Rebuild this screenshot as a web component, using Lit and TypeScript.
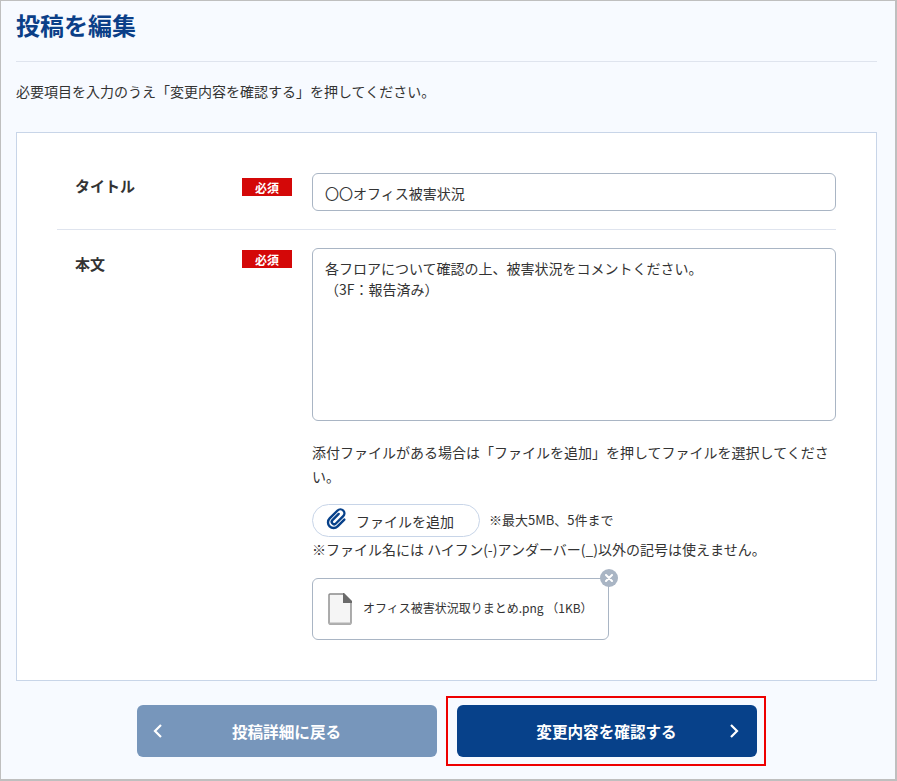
import { LitElement, html, css } from "lit";
import { customElement } from "lit/decorators.js";

@customElement("app-root")
export class AppRoot extends LitElement {
  static styles = css`
    :host { display: block; font-family: "Noto Sans CJK JP", "Noto Sans", sans-serif; color: #333; }
    * { box-sizing: border-box; }
    .page {
      width: 897px; height: 781px; background: #f7faff;
      border-top: 1px solid #bfbfbf; border-left: 1px solid #bfbfbf;
      border-right: 2px solid #bfbfbf; border-bottom: 2px solid #bfbfbf;
      padding: 0 18px 0 15px; overflow: hidden;
    }
    h1 { margin: 0; font-size: 24px; line-height: 24px; padding-top: 12px; font-weight: 700; color: #0b3f88; border-bottom: 1px solid #dfe4ee; height: 61px; }
    .lead { margin: 0; font-size: 14px; line-height: 20px; padding-top: 19px; height: 70px; }
    .card { background: #fff; border: 1px solid #c8d5e8; height: 549px; padding: 40px 40px 0; }
    .row { display: flex; }
    .row.first { height: 57px; border-bottom: 1px solid #dfe4ee; }
    .row.second { padding-top: 18px; }
    .label { width: 185px; padding-left: 18px; font-size: 15px; font-weight: 700; line-height: 26px; }
    .second .label { padding-top: 3px; }
    .badge-col { width: 70px; padding-top: 5px; }
    .second .badge-col { padding-top: 2px; }
    .badge { width: 50px; height: 18px; background: #d40808; color: #fff; font-size: 12px; font-weight: 700; line-height: 19px; text-align: center; }
    .main { width: 524px; }
    .input { height: 38px; border: 1px solid #a9b5c4; border-radius: 6px; padding: 0 12px; font-size: 14px; line-height: 38px; }
    .area { height: 173px; border: 1px solid #a9b5c4; border-radius: 6px; padding: 9px 12px; font-size: 14px; line-height: 21px; white-space: pre-wrap; }
    .note { margin: 0; font-size: 14px; line-height: 24px; padding-top: 19px; }
    .add-row { display: flex; align-items: center; gap: 10px; margin-top: 16px; }
    .add { width: 168px; height: 33px; border: 1px solid #c8d5e8; border-radius: 17px; background: #fff; display: flex; align-items: center; gap: 8px; padding-left: 13px; font-size: 14px; }
    .add svg { margin-bottom: 3px; }
    .small { font-size: 13px; line-height: 20px; margin-left: -1px; margin-bottom: 2px; }
    .rule { margin: 0; font-size: 14px; line-height: 20px; padding-top: 2px; }
    .file { position: relative; width: 297px; height: 62px; margin-top: 19px; border: 1px solid #a9b5c4; border-radius: 6px; display: flex; align-items: center; gap: 11px; padding-left: 15px; font-size: 12px; }
    .file span { margin-bottom: 3px; }
    .close { position: absolute; right: -10px; top: -10px; width: 18px; height: 18px; border-radius: 50%; background: #a9b5c4; display: flex; align-items: center; justify-content: center; }
    .btns { display: flex; justify-content: center; gap: 20px; padding-top: 24px; }
    .btn { position: relative; width: 300px; height: 52px; border-radius: 6px; color: #fff; font-size: 15.6px; font-weight: 700; display: flex; align-items: center; justify-content: center; }
    .back { background: #7796bb; }
    .next { background: #07418a; }
    .next::after { content: ""; position: absolute; left: -11px; right: -9px; top: -9px; bottom: -9px; border: 2px solid #ee0000; }
    .chev { position: absolute; top: 18px; }
    .back .chev { left: 16px; }
    .next .chev { right: 18px; }
  `;

  render() {
    return html`
      <div class="page">
        <h1>投稿を編集</h1>
        <p class="lead">必要項目を入力のうえ「変更内容を確認する」を押してください。</p>
        <div class="card">
          <div class="row first">
            <div class="label">タイトル</div>
            <div class="badge-col"><div class="badge">必須</div></div>
            <div class="main"><div class="input">〇〇オフィス被害状況</div></div>
          </div>
          <div class="row second">
            <div class="label">本文</div>
            <div class="badge-col"><div class="badge">必須</div></div>
            <div class="main">
              <div class="area">各フロアについて確認の上、被害状況をコメントください。
（3F：報告済み）</div>
              <p class="note">添付ファイルがある場合は「ファイルを追加」を押してファイルを選択してください。</p>
              <div class="add-row">
                <div class="add">
                  <svg width="22" height="22" viewBox="0 0 22 22" fill="none" stroke="#07418a" stroke-width="3" stroke-linecap="round">
                    <path transform="translate(11 11) rotate(45) scale(.8) translate(-9 -13)" d="M6 7v11a3 3 0 0 0 6 0V5a5 5 0 0 0-10 0v14a7 7 0 0 0 14 0V7"/>
                  </svg>
                  <span>ファイルを追加</span>
                </div>
                <span class="small">※最大5MB、5件まで</span>
              </div>
              <p class="rule">※ファイル名には ハイフン(-)アンダーバー(_)以外の記号は使えません。</p>
              <div class="file">
                <svg width="24" height="32" viewBox="0 0 24 32">
                  <path d="M1 2a1 1 0 0 1 1-1h13.500L23 8.500V30a1 1 0 0 1-1 1H2a1 1 0 0 1-1-1z" fill="#f5f5f5" stroke="#8a8a8a" stroke-width="1.4"/>
                  <path d="M1 30.500h22" stroke="#b0b0b0" stroke-width="2"/>
                  <path d="M15 0h1l8 8v2h-9z" fill="#6a6a6a"/>
                </svg>
                <span>オフィス被害状況取りまとめ.png （1KB）</span>
                <div class="close">
                  <svg width="8" height="8" viewBox="0 0 8 8" stroke="#fff" stroke-width="2" stroke-linecap="round"><path d="M1 1l6 6M7 1 1 7"/></svg>
                </div>
              </div>
            </div>
          </div>
        </div>
        <div class="btns">
          <div class="btn back">
            <svg class="chev" width="10" height="16" viewBox="0 0 10 16" fill="none" stroke="#fff" stroke-width="2.2"><path d="M8 2 2 8l6 6"/></svg>
            投稿詳細に戻る
          </div>
          <div class="btn next">
            変更内容を確認する
            <svg class="chev" width="10" height="16" viewBox="0 0 10 16" fill="none" stroke="#fff" stroke-width="2.2"><path d="m2 2 6 6-6 6"/></svg>
          </div>
        </div>
      </div>
    `;
  }
}
